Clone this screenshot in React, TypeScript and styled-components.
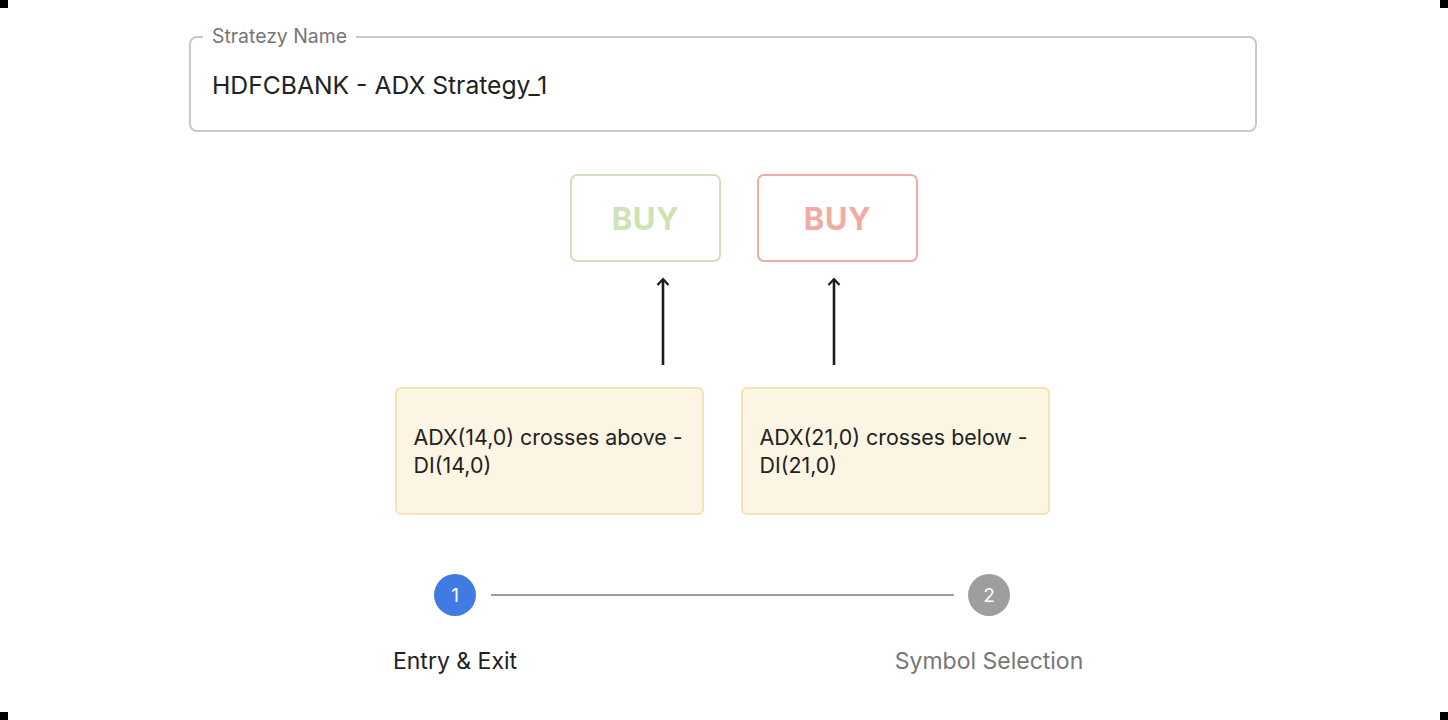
import React from "react";
import styled, { createGlobalStyle } from "styled-components";

const Global = createGlobalStyle`
  html, body { margin: 0; padding: 0; background: #ffffff; }
  body { font-family: Inter, "Noto Sans", "Liberation Sans", sans-serif; color: #222222; }
  * { box-sizing: border-box; }
`;

const Page = styled.div`
  width: 1448px;
  height: 720px;
  padding-top: 26px;
  display: flex;
  flex-direction: column;
  align-items: center;
  overflow: hidden;
`;

const Corner = styled.div<{ $top?: boolean; $left?: boolean }>`
  position: fixed;
  width: 8px;
  height: 8px;
  background: #000000;
  ${(p) => (p.$top ? "top: 0;" : "bottom: 0;")}
  ${(p) => (p.$left ? "left: 0;" : "right: 0;")}
`;

const NameField = styled.fieldset`
  width: 1068px;
  margin: 0 0 0 -2px;
  padding: 22px 21px 30px;
  border: 2px solid #c9c9c9;
  border-radius: 8px;
  min-inline-size: 0;
`;

const FieldLegend = styled.legend`
  margin-left: -9px;
  padding: 0 9px;
  font-size: 19.4px;
  line-height: 22px;
  color: #767676;
  position: relative;
  top: -1px;
`;

const FieldValue = styled.div`
  font-size: 24.7px;
  line-height: 30px;
  color: #222222;
`;

const Row = styled.div<{ $gap: number; $shift: number; $mt: number }>`
  display: flex;
  justify-content: center;
  gap: ${(p) => p.$gap}px;
  margin-top: ${(p) => p.$mt}px;
  transform: translateX(${(p) => p.$shift}px);
`;

const ActionBox = styled.div<{ $tone: "green" | "red"; $w: number }>`
  width: ${(p) => p.$w}px;
  height: 88px;
  border: 2px solid ${(p) => (p.$tone === "green" ? "#cfe3b9" : "#eeaca5")};
  border-radius: 7px;
  display: flex;
  align-items: center;
  justify-content: center;
  font-size: 31px;
  font-weight: 700;
  letter-spacing: 0.5px;
  color: ${(p) => (p.$tone === "green" ? "#cfe2b6" : "#f1aba4")};
`;

const ArrowSvg = styled.svg`
  display: block;
  width: 20px;
  height: 90px;
`;

const ConditionBox = styled.div`
  width: 309px;
  height: 128px;
  background: #fdf5e4;
  border: 2px solid #f6e3b5;
  border-radius: 6px;
  padding: 0 17px;
  display: flex;
  align-items: center;
  font-size: 21.4px;
  line-height: 28px;
  color: #222222;
`;

const Stepper = styled.div`
  display: flex;
  align-items: flex-start;
  margin-top: 59px;
  transform: translateX(-2px);
`;

const Step = styled.div`
  width: 42px;
  display: flex;
  flex-direction: column;
  align-items: center;
`;

const Circle = styled.div<{ $active: boolean }>`
  width: 42px;
  height: 42px;
  border-radius: 50%;
  background: ${(p) => (p.$active ? "#3f7be2" : "#9e9e9e")};
  color: #ffffff;
  display: flex;
  align-items: center;
  justify-content: center;
  font-size: 19px;
  flex-shrink: 0;
`;

const StepLabel = styled.div<{ $active: boolean }>`
  margin-top: 32px;
  white-space: nowrap;
  font-size: 23px;
  line-height: 27px;
  color: ${(p) => (p.$active ? "#222222" : "#777777")};
`;

const Connector = styled.div`
  width: 463px;
  height: 2px;
  background: #9e9e9e;
  margin: 20px 14px 0 15px;
  flex-shrink: 0;
`;

const Arrow = () => (
  <ArrowSvg viewBox="0 0 20 90">
    <path d="M10 2 V88" stroke="#1c1c1c" strokeWidth="2.6" fill="none" />
    <path d="M4.5 8 L10 2.2 L15.5 8" stroke="#1c1c1c" strokeWidth="2.2" fill="none" />
  </ArrowSvg>
);

export default function App() {
  return (
    <>
      <Global />
      <Page>
        <NameField>
          <FieldLegend>Stratezy Name</FieldLegend>
          <FieldValue>HDFCBANK - ADX Strategy_1</FieldValue>
        </NameField>

        <Row $gap={36} $shift={20} $mt={42}>
          <ActionBox $tone="green" $w={151}>BUY</ActionBox>
          <ActionBox $tone="red" $w={161}>BUY</ActionBox>
        </Row>

        <Row $gap={151} $shift={24} $mt={15}>
          <Arrow />
          <Arrow />
        </Row>

        <Row $gap={37} $shift={-2} $mt={20}>
          <ConditionBox>ADX(14,0) crosses above -DI(14,0)</ConditionBox>
          <ConditionBox>ADX(21,0) crosses below -DI(21,0)</ConditionBox>
        </Row>

        <Stepper>
          <Step>
            <Circle $active>1</Circle>
            <StepLabel $active>Entry &amp; Exit</StepLabel>
          </Step>
          <Connector />
          <Step>
            <Circle $active={false}>2</Circle>
            <StepLabel $active={false}>Symbol Selection</StepLabel>
          </Step>
        </Stepper>
      </Page>
      <Corner $top $left />
      <Corner $top />
      <Corner $left />
      <Corner />
    </>
  );
}
